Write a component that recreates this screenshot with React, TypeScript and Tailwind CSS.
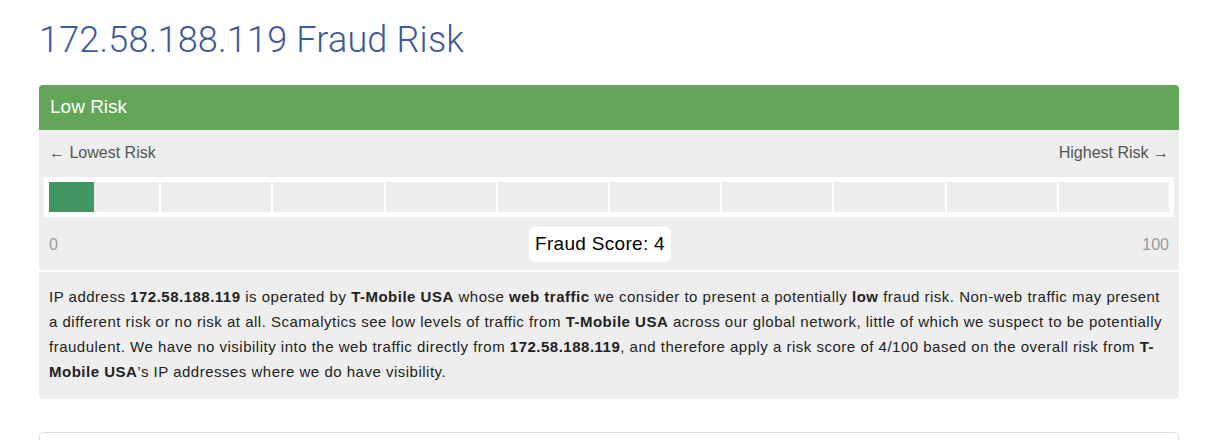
export default function App() {
  const segments = Array.from({ length: 10 });
  const score = 4;

  return (
    <div className="min-h-screen bg-white font-['Liberation_Sans',Arial,sans-serif]">
      <div className="ml-[39px] w-[1140px]">
        <h1 className="pt-[20px] text-[36px] leading-[40px] font-light text-[#3c5a99] font-['Roboto',sans-serif] tracking-[0.2px]">
          172.58.188.119 Fraud Risk
        </h1>

        <div className="mt-[25px] rounded-[4px] bg-[#eeeeee]">
          <div className="h-[45px] rounded-t-[4px] bg-[#63a65a] px-[11px] flex items-center">
            <span className="text-[19px] text-white">Low Risk</span>
          </div>

          {/* scale labels */}
          <div className="flex justify-between px-[10px] pt-[12px] text-[16px] leading-[22px] text-[#555]">
            <span>← Lowest Risk</span>
            <span>Highest Risk →</span>
          </div>

          {/* score bar */}
          <div className="mx-[5px] mt-[13px] bg-white p-[5px]">
            <div className="relative grid grid-cols-10 gap-[2px]">
              {segments.map((_, i) => (
                <div key={i} className="h-[30px] bg-[#eeeeee]" />
              ))}
              <div
                className="absolute left-0 top-0 h-[30px] bg-[#419664]"
                style={{ width: `${score}%` }}
              />
            </div>
          </div>

          <div className="grid grid-cols-[1fr_auto_1fr] items-center px-[10px] pt-[10px] pb-[8px] text-[16px] text-[#999]">
            <span>0</span>
            <div className="mr-[18px] rounded-[5px] bg-white px-[6px] h-[35px] flex items-center text-[19px] tracking-[0.3px] text-black">
              Fraud Score: {score}
            </div>
            <span className="text-right">100</span>
          </div>

          <div className="border-t-2 border-white px-[10px] pt-[12px] pb-[15px] text-[15px] leading-[25px] tracking-[0.5px] text-[#222]">
            IP address <b>172.58.188.119</b> is operated by <b>T-Mobile USA</b> whose <b>web traffic</b> we consider to present a potentially <b>low</b> fraud risk. Non-web traffic may present a different risk or no risk at all. Scamalytics see low levels of traffic from <b>T-Mobile USA</b> across our global network, little of which we suspect to be potentially fraudulent. We have no visibility into the web traffic directly from <b>172.58.188.119</b>, and therefore apply a risk score of 4/100 based on the overall risk from <b>T-Mobile USA</b>’s IP addresses where we do have visibility.
          </div>
        </div>

        <div className="mt-[33px] h-[40px] rounded-[4px] border border-[#dddddd]" />
      </div>
    </div>
  );
}
